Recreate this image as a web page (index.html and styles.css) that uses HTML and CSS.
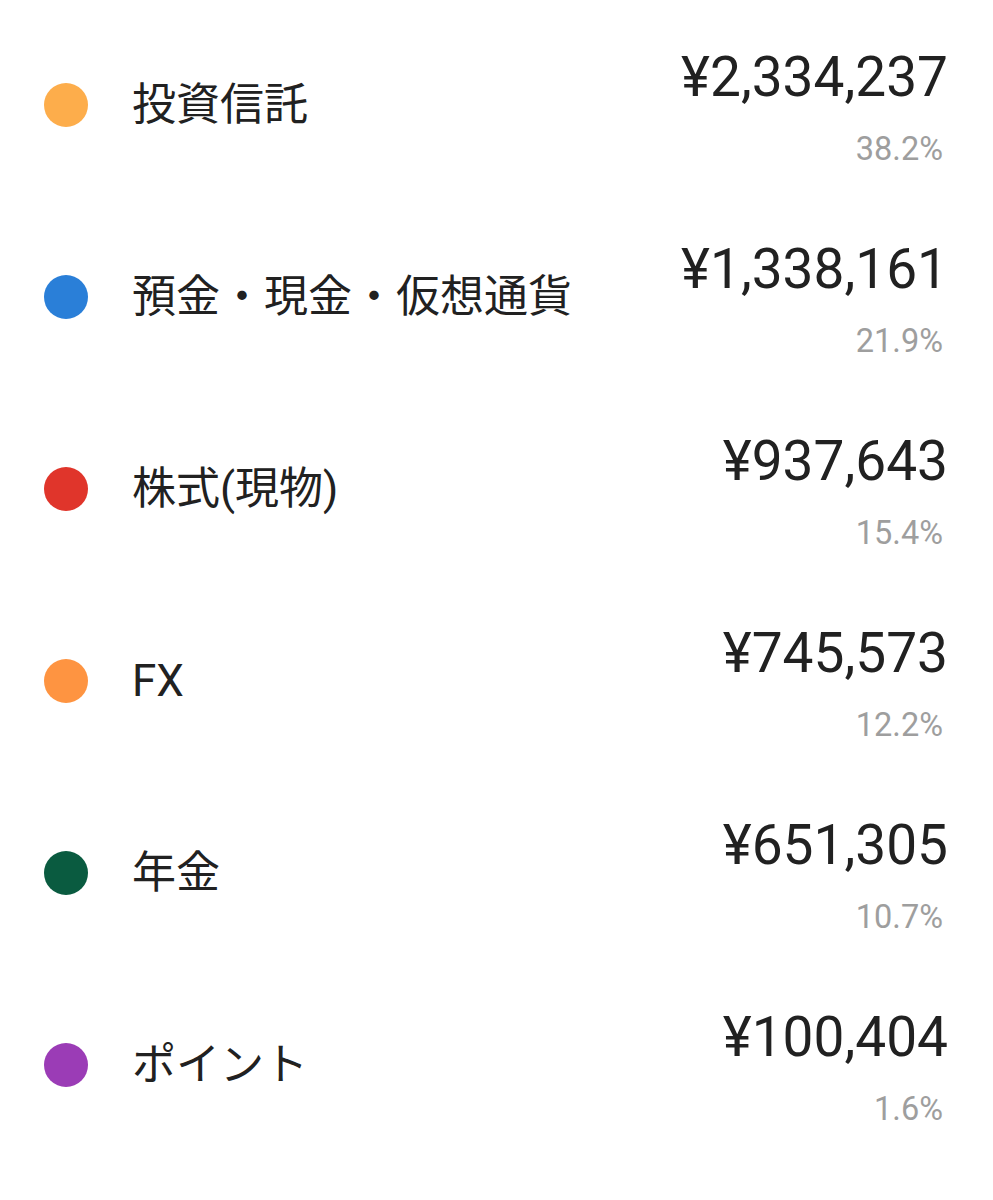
FILE: index.html
```html
<!DOCTYPE html>
<html lang="ja">
<head>
    <meta charset="UTF-8">
    <meta name="viewport" content="width=device-width, initial-scale=1.0">
    <title>資産の内訳</title>
    <link rel="stylesheet" href="styles.css">
</head>
<body>
    <ul class="asset-list">
        <li class="asset-row">
            <span class="dot dot-trust"></span>
            <span class="asset-name">投資信託</span>
            <div class="asset-value">
                <span class="amount">¥2,334,237</span>
                <span class="ratio">38.2%</span>
            </div>
        </li>
        <li class="asset-row">
            <span class="dot dot-cash"></span>
            <span class="asset-name">預金・現金・仮想通貨</span>
            <div class="asset-value">
                <span class="amount">¥1,338,161</span>
                <span class="ratio">21.9%</span>
            </div>
        </li>
        <li class="asset-row">
            <span class="dot dot-stock"></span>
            <span class="asset-name">株式(現物)</span>
            <div class="asset-value">
                <span class="amount">¥937,643</span>
                <span class="ratio">15.4%</span>
            </div>
        </li>
        <li class="asset-row">
            <span class="dot dot-fx"></span>
            <span class="asset-name">FX</span>
            <div class="asset-value">
                <span class="amount">¥745,573</span>
                <span class="ratio">12.2%</span>
            </div>
        </li>
        <li class="asset-row">
            <span class="dot dot-pension"></span>
            <span class="asset-name">年金</span>
            <div class="asset-value">
                <span class="amount">¥651,305</span>
                <span class="ratio">10.7%</span>
            </div>
        </li>
        <li class="asset-row">
            <span class="dot dot-point"></span>
            <span class="asset-name">ポイント</span>
            <div class="asset-value">
                <span class="amount">¥100,404</span>
                <span class="ratio">1.6%</span>
            </div>
        </li>
    </ul>
</body>
</html>
```

FILE: styles.css
```css
body {
    margin: 0;
    background-color: #ffffff;
    font-family: Roboto, "Noto Sans CJK JP", sans-serif;
    color: #212121;
}

.asset-list {
    list-style: none;
    margin: 0;
    padding: 9px 45px 0 44px;
}

.asset-row {
    display: flex;
    align-items: center;
    height: 192px;
}

.dot {
    flex: 0 0 44px;
    width: 44px;
    height: 44px;
    border-radius: 50%;
}

.dot-trust { background-color: #fdad4b; }
.dot-cash { background-color: #2a7fd8; }
.dot-stock { background-color: #e0352b; }
.dot-fx { background-color: #fe9441; }
.dot-pension { background-color: #0a5b40; }
.dot-point { background-color: #9b3cb6; }

.asset-name {
    flex: 1;
    margin-left: 44px;
    font-size: 44px;
    line-height: 52px;
}

.asset-value {
    display: flex;
    flex-direction: column;
    align-items: flex-end;
    margin-top: 2px;
}

.amount {
    font-size: 55px;
    line-height: 64px;
}

.ratio {
    margin-top: 22px;
    margin-right: 5px;
    font-size: 32.5px;
    line-height: 36px;
    color: #9e9e9e;
}
```
